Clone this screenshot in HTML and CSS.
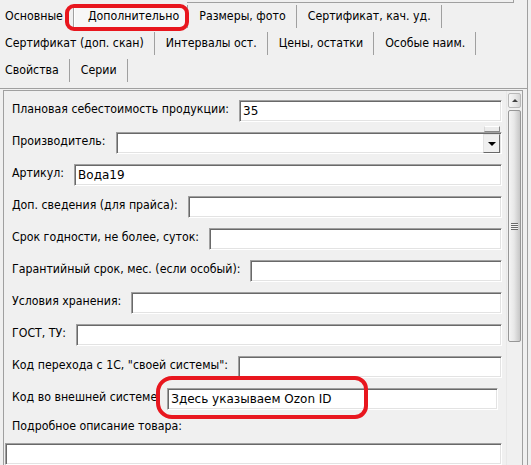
FILE: index.html
```html
<!DOCTYPE html>
<html lang="ru">
<head>
<meta charset="utf-8">
<title>Дополнительно</title>
<link rel="stylesheet" href="styles.css">
</head>
<body>
<div class="window">
  <div class="tabs">
    <div class="tabrow">
      <div class="tab">Основные</div>
      <div class="tab active">Дополнительно</div>
      <div class="tab">Размеры, фото</div>
      <div class="tab">Сертификат, кач. уд.</div>
    </div>
    <div class="tabrow">
      <div class="tab">Сертификат (доп. скан)</div>
      <div class="tab">Интервалы ост.</div>
      <div class="tab">Цены, остатки</div>
      <div class="tab">Особые наим.</div>
    </div>
    <div class="tabrow">
      <div class="tab">Свойства</div>
      <div class="tab">Серии</div>
    </div>
  </div>
  <div class="panel">
    <div class="form">
      <div class="row"><span class="lbl">Плановая себестоимость продукции:</span><div class="edit">35</div></div>
      <div class="row"><span class="lbl">Производитель:</span><div class="edit combo"><span class="dd"></span></div></div>
      <div class="row"><span class="lbl">Артикул:</span><div class="edit">Вода19</div></div>
      <div class="row"><span class="lbl">Доп. сведения (для прайса):</span><div class="edit"></div></div>
      <div class="row"><span class="lbl">Срок годности, не более, суток:</span><div class="edit"></div></div>
      <div class="row"><span class="lbl">Гарантийный срок, мес. (если особый):</span><div class="edit"></div></div>
      <div class="row"><span class="lbl">Условия хранения:</span><div class="edit"></div></div>
      <div class="row"><span class="lbl">ГОСТ, ТУ:</span><div class="edit"></div></div>
      <div class="row"><span class="lbl">Код перехода с 1С, "своей системы":</span><div class="edit"></div></div>
      <div class="row"><span class="lbl clip">Код во внешней системе</span><div class="edit marked">Здесь указываем Ozon ID</div></div>
      <div class="caption">Подробное описание товара:</div>
      <div class="memo"></div>
    </div>
    <div class="vscroll">
      <div class="sb-up"><span class="arrow"></span></div>
      <div class="sb-thumb"><span class="grip"></span></div>
    </div>
  </div>
</div>
</body>
</html>
```
FILE: styles.css
```css
*, *::before, *::after { box-sizing: border-box; }

body {
  margin: 0;
  background: #f0f0f0;
  font-family: "DejaVu Sans Condensed", "Liberation Sans", Arial, sans-serif;
  font-stretch: condensed;
  font-size: 12.25px;
  color: #000;
  overflow: hidden;
}

.window {
  width: 528px;
  height: 465px;
  border-right: 1px solid #a0a0a0;
}

/* ---------- tabs ---------- */
.tabs {
  position: relative;
  height: 89px;
  padding-top: 3px;
  border-bottom: 1px solid #a0a0a0;
}
.tabs::before {
  content: "";
  position: absolute;
  top: 0;
  left: 187px;
  width: 327px;
  height: 3px;
  border-bottom: 1px solid #a0a0a0;
  border-right: 1px solid #a0a0a0;
}
.tabrow {
  display: flex;
  height: 27px;
}
.tab {
  margin: 2px 0;
  height: 23px;
  line-height: 23px;
  padding: 0 10px 0 11px;
  border-right: 1px solid #a0a0a0;
  white-space: nowrap;
}
.tab:first-child { padding-left: 5px; }
.tab.active {
  position: relative;
  background: #f7f7f7;
  border-left: 1px solid #fff;
  padding: 0 8px 0 13px;
}
.tab.active::after {
  content: "";
  position: absolute;
  left: -10px;
  right: -2px;
  top: -1px;
  bottom: -3px;
  border: 4px solid #e8161e;
  border-radius: 9px;
}

/* ---------- panel ---------- */
.panel {
  margin: 1px 0 0 3px;
  width: 520px;
  height: 375px;
  border: 1px solid #a0a0a0;
  border-bottom: none;
  display: flex;
}
.form {
  flex: 1;
  padding: 9px 4px 0 1px;
  display: flex;
  flex-direction: column;
  gap: 10px;
}
.row {
  display: flex;
  align-items: flex-start;
  gap: 10px;
  padding-left: 7px;
  height: 22px;
}
.lbl {
  margin-top: 1px;
  line-height: 16px;
  white-space: nowrap;
}
.lbl.clip { overflow: hidden; }

.edit, .memo {
  background: #fff;
  border: 1px solid;
  border-color: #a0a0a0 #fff #fff #a0a0a0;
  box-shadow: inset 1px 1px #696969, inset -1px -1px #e3e3e3;
}
.edit {
  position: relative;
  flex: 1 0 auto;
  height: 22px;
  padding: 3px 0 0 3px;
  font-family: "DejaVu Sans", sans-serif;
  font-stretch: normal;
  font-size: 12px;
  line-height: 14px;
}
.edit.marked { flex: 0 0 331px; }
.edit.marked::after {
  content: "";
  position: absolute;
  left: -12px;
  top: -13px;
  width: 212px;
  height: 43px;
  border: 4px solid #e8161e;
  border-radius: 16px 13px 13px 16px;
}

.combo::before {
  content: "";
  position: absolute;
  top: -7px;
  right: 1px;
  width: 16px;
  height: 6px;
  background: #ececec;
  border-top: 1px solid #fff;
  border-bottom: 1px solid #8a8a8a;
  border-left: 1px solid #d8d8d8;
  border-right: 1px solid #8a8a8a;
}
.dd {
  position: absolute;
  top: 1px;
  right: 1px;
  width: 17px;
  height: 19px;
  background: #f0f0f0;
  border: 1px solid;
  border-color: #e3e3e3 #696969 #696969 #e3e3e3;
  display: flex;
  align-items: center;
  justify-content: center;
}
.dd::after {
  content: "";
  border-left: 4px solid transparent;
  border-right: 4px solid transparent;
  border-top: 4px solid #000;
}

.caption {
  padding-left: 7px;
  line-height: 13px;
  height: 13px;
}
.memo {
  height: 40px;
}

/* ---------- scrollbar ---------- */
.vscroll {
  width: 16px;
  padding: 2px 1px 0 1px;
  border-left: 1px solid #e8e8e8;
  background: #f0f0f0;
}
.sb-up {
  height: 15px;
  border: 1px solid #b8b8b8;
  border-radius: 2px;
  background: linear-gradient(to right, #f6f6f6, #e6e6e6 60%, #d4d4d4);
  display: flex;
  align-items: center;
  justify-content: center;
}
.arrow {
  border-left: 3px solid transparent;
  border-right: 3px solid transparent;
  border-bottom: 3px solid #404040;
}
.sb-thumb {
  margin-top: 2px;
  height: 232px;
  border: 1px solid #979797;
  border-radius: 2px;
  background: linear-gradient(to right, #f4f4f4, #e8e8e8 45%, #c6c6c6);
  display: flex;
  align-items: center;
  justify-content: center;
}
.grip {
  width: 7px;
  height: 7px;
  background: repeating-linear-gradient(to bottom, #6a6a6a 0 1px, #f4f4f4 1px 2px);
}
```
